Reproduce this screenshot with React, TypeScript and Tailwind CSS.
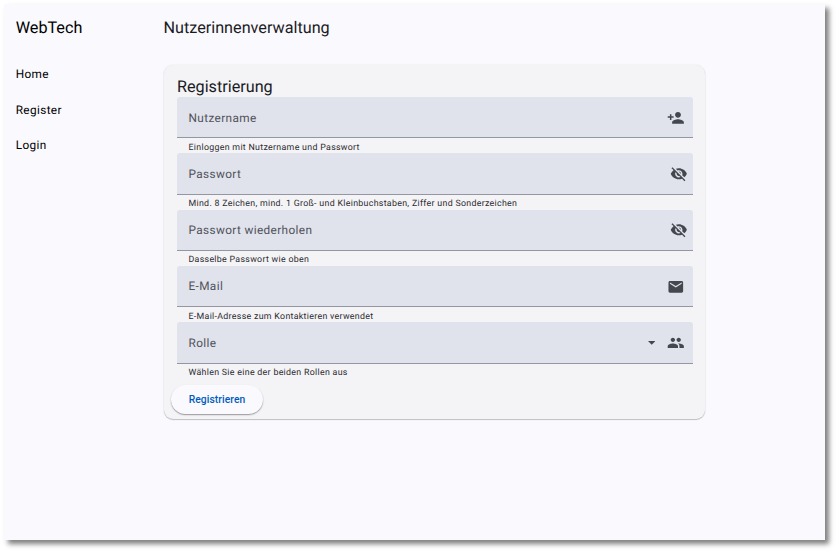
import type { ReactNode } from 'react';
import { MdEmail, MdPeople, MdPersonAdd, MdVisibilityOff } from 'react-icons/md';

type FieldProps = {
  label: string;
  hint: string;
  children: ReactNode;
  inset?: string;
};

function Field({ label, hint, children, inset = 'pr-[8.4px]' }: FieldProps) {
  return (
    <div className="h-[56.3px]">
      <div
        className={`flex h-[41.2px] items-center justify-between rounded-t-[3px] border-b border-[#9496a2] bg-[#e0e2ec] pl-[11.5px] pt-[0.6px] text-[#44474e] ${inset}`}
      >
        <span className="text-[11.8px] leading-4 tracking-[0.37px] text-[#50535a]">{label}</span>
        <span className="flex items-center text-[17.6px]">{children}</span>
      </div>
      <div className="pl-[11.5px] pt-[3.5px] text-[8.82px] leading-[12px] tracking-[0.305px] text-[#2b2c30]">
        {hint}
      </div>
    </div>
  );
}

export default function App() {
  return (
    <div className="h-[554px] w-[838px] overflow-hidden bg-white pl-[4px] pt-[4px] font-[Roboto,sans-serif] text-[#1a1b1f] [text-rendering:geometricPrecision]">
      <div className="flex h-[536px] w-[821px] bg-[#faf9fe] shadow-[4px_4px_5px_rgba(0,0,0,0.5)]">
        <nav className="w-[160px] shrink-0 pl-[11.7px]">
          <div className="pt-[12px] text-[16.2px] leading-6 text-black">WebTech</div>
          <div className="flex flex-col pt-[17.2px] text-[11.8px] tracking-[0.37px] text-black">
            <a className="h-[35.4px] leading-[35.4px]">Home</a>
            <a className="h-[35.4px] leading-[35.4px]">Register</a>
            <a className="h-[35.4px] leading-[35.4px]">Login</a>
          </div>
        </nav>
        <main className="flex-1">
          <h1 className="-ml-[0.5px] pt-[12px] text-[16.2px] leading-6">Nutzerinnenverwaltung</h1>
          <section className="mt-[25px] h-[354px] w-[541px] rounded-[9px] bg-[#f4f3f6] pl-[13px] pr-[12px] pt-[10px] shadow-[0_1px_1px_rgba(0,0,0,0.22),0_0_2px_rgba(0,0,0,0.1)]">
            <h2 className="h-[22.2px] text-[16.2px] leading-6">Registrierung</h2>
            <Field label="Nutzername" hint="Einloggen mit Nutzername und Passwort">
              <MdPersonAdd />
            </Field>
            <Field
              label="Passwort"
              hint="Mind. 8 Zeichen, mind. 1 Groß- und Kleinbuchstaben, Ziffer und Sonderzeichen"
              inset="pr-[5.5px]"
            >
              <MdVisibilityOff />
            </Field>
            <Field label="Passwort wiederholen" hint="Dasselbe Passwort wie oben" inset="pr-[5.5px]">
              <MdVisibilityOff />
            </Field>
            <Field label="E-Mail" hint="E-Mail-Adresse zum Kontaktieren verwendet">
              <MdEmail />
            </Field>
            <Field label="Rolle" hint="Wählen Sie eine der beiden Rollen aus">
              <svg viewBox="0 0 10 5" className="mr-[12px] h-[3.7px] w-[7.4px] fill-current">
                <path d="M0 0h10L5 5z" />
              </svg>
              <MdPeople />
            </Field>
            <button className="-ml-[6px] mt-[6.3px] flex h-[29.4px] w-[92px] items-center justify-center rounded-full bg-[#faf9fe] text-[10.3px] font-medium tracking-[0.07px] text-[#005cbb] shadow-[0_1px_1px_rgba(0,0,0,0.25),0_1px_2px_rgba(0,0,0,0.16)]">
              Registrieren
            </button>
          </section>
        </main>
      </div>
    </div>
  );
}
